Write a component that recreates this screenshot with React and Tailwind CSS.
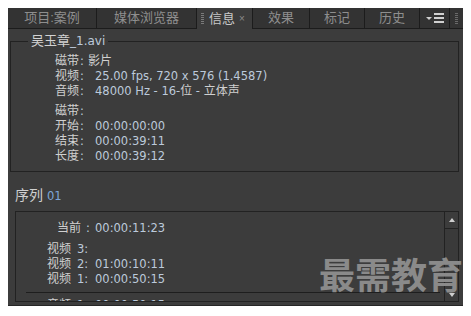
import React from "react";

const F = { fontFamily: '"Liberation Sans", "Noto Sans CJK SC", sans-serif' };
const V = { fontFamily: '"DejaVu Sans", "Noto Sans CJK SC", sans-serif' };

function Tab({ children, w, className = "" }) {
  return (
    <div
      className={`h-[21px] flex items-center justify-center border-r border-b border-[#1c1c1c] bg-[#333333] text-[#8e8e8e] text-[13px] ${className}`}
      style={{ width: w }}
    >
      {children}
    </div>
  );
}

function Lbl({ children }) {
  return <span className="text-[#d0d0d0] text-[12px]">{children}</span>;
}

function Val({ children, className = "" }) {
  return (
    <span className={`text-[#bccadb] text-[11.5px] whitespace-nowrap ${className}`} style={V}>
      {children}
    </span>
  );
}

function Row({ label, value }) {
  return (
    <div className="flex leading-[15px] items-baseline">
      <div className="w-[40px] flex items-baseline shrink-0">
        <Lbl>{label}</Lbl>
        <Val className="ml-[1px]">:</Val>
      </div>
      <Val>{value}</Val>
    </div>
  );
}

function Grip({ color }) {
  return (
    <div className="w-[3px] h-[11px] flex flex-col justify-between">
      {[0, 1, 2, 3, 4, 5].map((i) => (
        <div key={i} className="h-[1px]" style={{ background: color }} />
      ))}
    </div>
  );
}

export default function App() {
  return (
    <div className="w-[471px] h-[316px] bg-white pt-[8px] pl-[8px] pr-[8px]" style={F}>
      <div className="w-[455px] h-[298px] bg-[#3c3c3c] flex flex-col relative overflow-hidden text-[12px]">
        {/* tab bar */}
        <div className="h-[21px] flex bg-[#262626] shrink-0">
          <Tab w={89}>项目:案例</Tab>
          <Tab w={100}>媒体浏览器</Tab>
          <div className="w-[56px] h-[21px] flex items-center bg-[#3c3c3c] border-r border-[#1c1c1c] text-[13px]">
            <div className="ml-[4px]">
              <Grip color="#7a7a7a" />
            </div>
            <span className="ml-[5px] text-[#c8c8c8]">信息</span>
            <span className="ml-[4px] text-[#8a8a8a] text-[10px]">×</span>
          </div>
          <Tab w={57}>效果</Tab>
          <Tab w={55}>标记</Tab>
          <Tab w={55}>历史</Tab>
          <Tab w={30}>
            <div className="flex items-center gap-[2px]">
              <div className="w-0 h-0 border-l-[3px] border-r-[3px] border-t-[3px] border-l-transparent border-r-transparent border-t-[#d0d0d0]" />
              <div className="flex flex-col gap-[2px]">
                <div className="w-[10px] h-[2px] bg-[#d0d0d0]" />
                <div className="w-[10px] h-[2px] bg-[#d0d0d0]" />
                <div className="w-[10px] h-[2px] bg-[#d0d0d0]" />
              </div>
            </div>
          </Tab>
          <div className="flex-1 h-[21px] bg-[#333333] border-b border-[#1c1c1c] flex items-center justify-center">
            <Grip color="#6a6a6a" />
          </div>
        </div>

        {/* content */}
        <div className="flex-1 flex flex-col pl-[2px] pr-[4px] pt-[12px]">
          {/* group box */}
          <div className="relative border border-[#222222] h-[131px] pl-[44px] pt-[12px]">
            <div className="absolute left-[17px] top-[-9px] px-[3px] bg-[#3c3c3c] text-[#d2d2d2] text-[13px] leading-[16px]">
              吴玉章<span className="text-[#bccadb] text-[12px]" style={V}>_1.avi</span>
            </div>
            <div className="flex leading-[15px] items-baseline">
              <Lbl>磁带</Lbl>
              <Val className="ml-[1px] mr-[4px]">:</Val>
              <Lbl>影片</Lbl>
            </div>
            <Row label="视频" value="25.00 fps, 720 x 576 (1.4587)" />
            <Row
              label="音频"
              value={
                <>
                  48000 Hz - 16-<span style={F} className="text-[12px] text-[#d0d0d0]">位</span> -{" "}
                  <span style={F} className="text-[12px] text-[#d0d0d0]">立体声</span>
                </>
              }
            />
            <div className="h-[5px]" />
            <Row label="磁带" value="" />
            <Row label="开始" value="00:00:00:00" />
            <Row label="结束" value="00:00:39:11" />
            <Row label="长度" value="00:00:39:12" />
          </div>

          <div className="mt-[15px] ml-[5px] leading-[17px] text-[14px] text-[#d0d0d0]">
            序列{" "}
            <span className="text-[#7ea6d8] text-[11.5px]" style={V}>
              01
            </span>
          </div>

          <div className="mt-[6px] ml-[5px] h-[91px] flex border border-[#222222]">
            <div className="flex-1 relative overflow-hidden pl-[31px] pt-[9px]">
              <div className="flex leading-[15px] items-baseline ml-[10px]">
                <div className="w-[38px] flex items-baseline shrink-0">
                  <Lbl>当前</Lbl>
                  <Val className="ml-[5px]">:</Val>
                </div>
                <Val>00:00:11:23</Val>
              </div>
              <div className="h-[6px]" />
              {[
                ["3:", ""],
                ["2:", "01:00:10:11"],
                ["1:", "00:00:50:15"],
              ].map(([n, v]) => (
                <div key={n} className="flex leading-[15px] items-baseline">
                  <div className="w-[48px] flex items-baseline shrink-0">
                    <Lbl>视频</Lbl>
                    <Val className="ml-[6px]">{n}</Val>
                  </div>
                  <Val>{v}</Val>
                </div>
              ))}
              <div className="ml-[-21px] mr-[4px] mt-[5px] h-px bg-[#1e1e1e]" />
              <div className="flex leading-[15px] items-baseline mt-[5px]">
                <div className="w-[48px] flex items-baseline shrink-0">
                  <Lbl>音频</Lbl>
                  <Val className="ml-[6px]">1:</Val>
                </div>
                <Val>00:00:50:15</Val>
              </div>
            </div>
            <div className="w-[14px] border-l border-[#222222] flex flex-col">
              <div className="h-[17px] border-b border-[#222222] flex items-center justify-center">
                <div className="w-0 h-0 border-l-[3px] border-r-[3px] border-b-[4px] border-l-transparent border-r-transparent border-b-[#cfcfcf]" />
              </div>
              <div className="flex-1 bg-[#3a3a3a]" />
              <div className="h-[12px] flex items-center justify-center">
                <div className="w-0 h-0 border-l-[3px] border-r-[3px] border-t-[4px] border-l-transparent border-r-transparent border-t-[#cfcfcf]" />
              </div>
            </div>
          </div>
          <div className="h-[3px]" />
        </div>
        <div className="h-[3px] bg-[#262626] shrink-0" />

        {/* watermark */}
        <div
          className="absolute left-[311px] top-[243px] text-[36px] font-bold leading-[44px] text-[#8a8a8a] whitespace-nowrap"
          style={{ fontFamily: '"Noto Sans CJK SC", sans-serif' }}
        >
          最需教育
        </div>
      </div>
    </div>
  );
}
